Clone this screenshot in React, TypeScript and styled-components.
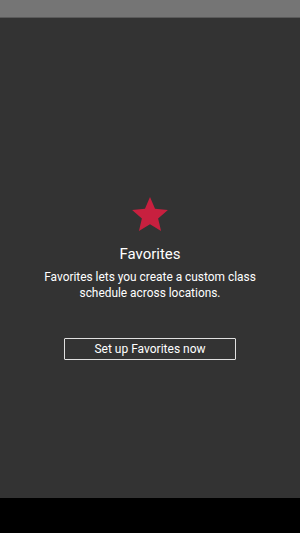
import React from "react";
import styled, { createGlobalStyle } from "styled-components";

const Global = createGlobalStyle`
  html, body { margin: 0; padding: 0; background: #000; }
  body { font-family: Roboto, "Liberation Sans", sans-serif; }
`;

const Screen = styled.div`
  width: 300px;
  height: 533px;
  display: flex;
  flex-direction: column;
`;

const StatusBar = styled.div`
  height: 18px;
  background: #757575;
  border-bottom: 1px solid #5a5a5a;
  box-sizing: border-box;
`;

const Content = styled.main`
  flex: 1;
  background: #333333;
  display: flex;
  flex-direction: column;
  align-items: center;
  padding-top: 179px;
  box-sizing: border-box;
`;

const NavBar = styled.div`
  height: 35px;
  background: #000;
`;

const Star = styled.svg`
  width: 36px;
  height: 34px;
  display: block;
`;

const Title = styled.h1`
  margin: 13px 0 0;
  font-size: 15px;
  line-height: 20px;
  font-weight: 400;
  color: #ffffff;
`;

const Description = styled.p`
  margin: 5px 0 0;
  font-size: 11.9px;
  line-height: 16px;
  color: #ffffff;
  text-align: center;
  width: 220px;
`;

const Button = styled.button`
  margin-top: 37px;
  width: 172px;
  height: 22px;
  background: transparent;
  border: 1px solid #e0e0e0;
  border-radius: 1px;
  color: #ffffff;
  font-family: Roboto, "Liberation Sans", sans-serif;
  font-size: 12px;
  padding: 0;
  box-sizing: border-box;
`;

export default function App() {
  return (
    <>
      <Global />
      <Screen>
        <StatusBar />
        <Content>
          <Star viewBox="2 2 20 19">
            <path
              fill="#C8203F"
              d="M12 17.27L18.18 21l-1.64-7.03L22 9.24l-7.19-.61L12 2 9.19 8.63 2 9.24l5.46 4.73L5.82 21z"
            />
          </Star>
          <Title>Favorites</Title>
          <Description>
            Favorites lets you create a custom class schedule across locations.
          </Description>
          <Button>Set up Favorites now</Button>
        </Content>
        <NavBar />
      </Screen>
    </>
  );
}
